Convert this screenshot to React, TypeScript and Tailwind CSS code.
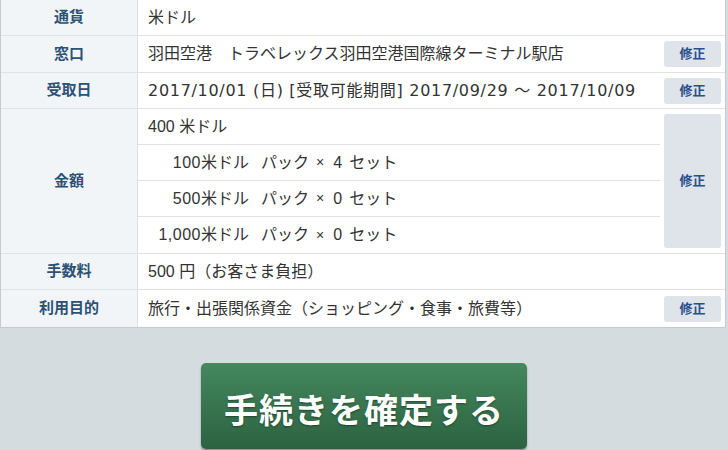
const FixBtn = ({ tall = false }: { tall?: boolean }) => (
  <button
    className={`flex items-center justify-center w-[57px] rounded-[3px] bg-[#dfe3ea] text-[13px] font-bold text-[#2a4f8f] ${tall ? "h-full" : "h-[26px]"}`}
  >
    修正
  </button>
)

const Label = ({ children }: { children: React.ReactNode }) => (
  <div className="flex items-center justify-center border-r border-[#dce1e5] bg-[#f2f5f8] text-[15px] font-bold text-[#2c5275]">
    {children}
  </div>
)

const PackRow = ({ amount, count }: { amount: string; count: number }) => (
  <div className="flex h-[36px] items-center border-b border-[#dfe3e6] pl-[10px] last:border-b-0">
    <span className="w-[53px] text-right tracking-[0.5px]">{amount}</span>
    <span>米ドル</span>
    <span className="ml-[12px]">パック</span>
    <span className="ml-[7px] text-[14px]">×</span>
    <span className="ml-[9px]">{count}</span>
    <span className="ml-[7px]">セット</span>
  </div>
)

const App = () => {
  return (
    <div
      className="h-[450px] w-[728px] overflow-hidden bg-[#d5dcdf] text-[16px] text-[#333]"
      style={{ fontFamily: '"Liberation Sans", "Noto Sans CJK JP", sans-serif' }}
    >
      <div className="w-[726px] border-x border-b border-[#c3cbd0] bg-white">
        <div className="grid h-[36px] grid-cols-[137px_1fr] border-b border-[#dfe3e6]">
          <Label>通貨</Label>
          <div className="flex items-center pl-[10px]">米ドル</div>
        </div>
        <div className="grid h-[37px] grid-cols-[137px_1fr] border-b border-[#dfe3e6]">
          <Label>窓口</Label>
          <div className="flex items-center justify-between pl-[10px] pr-[4px]">
            <span>羽田空港　トラベレックス羽田空港国際線ターミナル駅店</span>
            <FixBtn />
          </div>
        </div>
        <div className="grid h-[36px] grid-cols-[137px_1fr] border-b border-[#dfe3e6]">
          <Label>受取日</Label>
          <div className="flex items-center justify-between pl-[10px] pr-[4px]">
            <span
              className="tracking-[0.7px]"
              style={{ fontFamily: '"DejaVu Sans", "Noto Sans CJK JP", sans-serif' }}
            >
              2017/10/01 (日) [受取可能期間] 2017/09/29 〜 2017/10/09
            </span>
            <FixBtn />
          </div>
        </div>
        <div className="grid h-[145px] grid-cols-[137px_1fr] border-b border-[#dfe3e6]">
          <Label>金額</Label>
          <div className="flex">
            <div className="flex w-[522px] flex-col">
              <div className="flex h-[36px] items-center border-b border-[#dfe3e6] pl-[10px]">400 米ドル</div>
              <PackRow amount="100" count={4} />
              <PackRow amount="500" count={0} />
              <PackRow amount="1,000" count={0} />
            </div>
            <div className="flex flex-1 justify-end py-[5px] pr-[4px]">
              <FixBtn tall />
            </div>
          </div>
        </div>
        <div className="grid h-[36px] grid-cols-[137px_1fr] border-b border-[#dfe3e6]">
          <Label>手数料</Label>
          <div className="flex items-center pl-[10px]">500 円（お客さま負担）</div>
        </div>
        <div className="grid h-[37px] grid-cols-[137px_1fr]">
          <Label>利用目的</Label>
          <div className="flex items-center justify-between pl-[10px] pr-[4px]">
            <span>旅行・出張関係資金（ショッピング・食事・旅費等）</span>
            <FixBtn />
          </div>
        </div>
      </div>
      <div className="flex justify-center pt-[35px]">
        <button className="flex h-[86px] w-[326px] items-center justify-center rounded-[5px] bg-gradient-to-b from-[#44885f] to-[#2c6240] pt-[10px] text-[34px] font-bold tracking-[1px] text-white shadow-[0_2px_2px_rgba(0,0,0,0.35)] [text-shadow:0_1px_2px_rgba(0,0,0,0.4)]">
          手続きを確定する
        </button>
      </div>
    </div>
  )
}

export default App
